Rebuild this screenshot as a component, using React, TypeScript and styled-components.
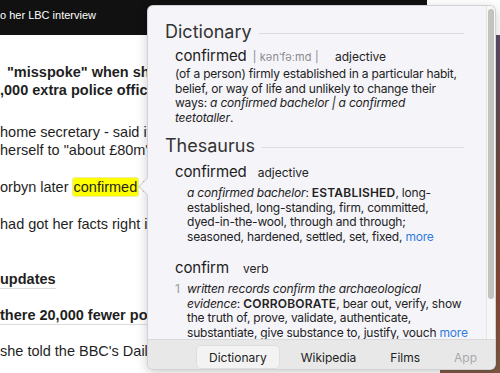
import React from "react";
import styled, { createGlobalStyle } from "styled-components";

const GlobalStyle = createGlobalStyle`
  html, body {
    margin: 0;
    padding: 0;
  }
  body {
    width: 500px;
    height: 373px;
    overflow: hidden;
    background: #fff;
  }
`;

const Page = styled.div`
  position: relative;
  width: 500px;
  height: 373px;
  overflow: hidden;
  display: flex;
  font-family: "Liberation Sans", Arial, sans-serif;
  color: #1f1f1f;
`;

const Article = styled.div`
  flex: 1;
  min-width: 0;
  display: flex;
  flex-direction: column;
  overflow: hidden;
  white-space: nowrap;
`;

const TopBar = styled.div`
  width: 427px;
  height: 35px;
  box-sizing: border-box;
  padding-top: 8px;
  background: #111;
  color: #fff;
  font-size: 11px;
  line-height: 14px;
`;

const Para = styled.p<{ $gap: number; $bold?: boolean; $indent?: number }>`
  margin: ${(p) => p.$gap}px 0 0;
  font-size: 14.5px;
  line-height: 18px;
  font-weight: ${(p) => (p.$bold ? 700 : 400)};
  text-indent: ${(p) => p.$indent ?? 0}px;
`;

const SubHead = styled.h3<{ $gap: number; $full?: boolean }>`
  margin: ${(p) => p.$gap}px 0 0;
  align-self: ${(p) => (p.$full ? "stretch" : "flex-start")};
  font-size: 14.5px;
  line-height: 18px;
  font-weight: 700;
  border-bottom: 1px solid #dcdcdc;
`;

const Highlight = styled.span`
  background: #ffff00;
  padding: 1px 1px;
  border-radius: 2px;
  box-shadow: 0 0 0 1px rgba(210, 200, 0, 0.35);
`;

const SideImage = styled.div`
  width: 60px;
  margin-top: 35px;
  background: linear-gradient(180deg, #5b4d6b 0%, #6d4b3d 40%, #8a4a36 75%, #7d5a45 100%);
`;

const Popup = styled.div`
  position: absolute;
  left: 147px;
  top: 5px;
  width: 349px;
  height: 365px;
  box-sizing: border-box;
  border: 1px solid rgba(0, 0, 0, 0.14);
  border-radius: 6px;
  background: #f5f4f9;
  box-shadow: 0 3px 12px rgba(0, 0, 0, 0.2);
  font-family: Inter, "Noto Sans", sans-serif;
  color: #222;

  &::before {
    content: "";
    position: absolute;
    left: -7px;
    top: 174px;
    width: 12px;
    height: 12px;
    background: #f5f4f9;
    border-left: 1px solid rgba(0, 0, 0, 0.14);
    border-bottom: 1px solid rgba(0, 0, 0, 0.14);
    transform: rotate(45deg);
  }
`;

const Frame = styled.div`
  position: relative;
  height: 100%;
  border-radius: 5px;
  overflow: hidden;
  display: flex;
  flex-direction: column;
`;

const Body = styled.div`
  flex: 1;
  min-height: 0;
  display: flex;
`;

const Content = styled.div`
  flex: 1;
  min-width: 0;
  padding: 15px 22px 0 17px;
  overflow: hidden;
`;

const ScrollTrack = styled.div`
  width: 8px;
  display: flex;
  flex-direction: column;
  background: #f7f7f7;
  border-left: 1px solid #e4e4e4;
`;

const ScrollThumb = styled.div`
  margin: 3px 1px 0 1px;
  height: 290px;
  border-radius: 4px;
  background: #c2c3bf;
`;

const SectionHead = styled.div<{ $gap?: number }>`
  display: flex;
  align-items: center;
  gap: 7px;
  margin-top: ${(p) => p.$gap ?? 0}px;
`;

const SectionTitle = styled.h2`
  margin: 0;
  font-size: 18px;
  line-height: 22px;
  font-weight: 400;
  color: #333;
`;

const Rule = styled.div`
  flex: 1;
  height: 1px;
  margin-top: 2px;
  background: #dddde0;
`;

const Entry = styled.div<{ $gap: number }>`
  margin-top: ${(p) => p.$gap}px;
  padding-left: 10px;
`;

const HeadRow = styled.div`
  display: flex;
  align-items: baseline;
`;

const Headword = styled.span`
  font-size: 15px;
  line-height: 20px;
  color: #1c1c1c;
  letter-spacing: -0.1px;
`;

const Pron = styled.span`
  margin-left: 6px;
  font-size: 11px;
  color: #8a8a8a;
  letter-spacing: 0.2px;
`;

const Pos = styled.span<{ $gap: number }>`
  margin-left: ${(p) => p.$gap}px;
  font-size: 12px;
  color: #222;
`;

const Def = styled.div<{ $gap: number; $indent?: number }>`
  margin-top: ${(p) => p.$gap}px;
  padding-left: ${(p) => p.$indent ?? 0}px;
  font-size: 12px;
  line-height: 14.5px;
  letter-spacing: -0.2px;
  white-space: nowrap;
`;

const Sense = styled.div<{ $gap: number }>`
  margin-top: ${(p) => p.$gap}px;
  display: grid;
  grid-template-columns: 12px 1fr;
  font-size: 12px;
  line-height: 14.5px;
  letter-spacing: -0.2px;
  white-space: nowrap;
`;

const SenseNum = styled.span`
  color: #9a9a9a;
`;

const Key = styled.b`
  font-weight: 600;
  letter-spacing: 0.2px;
`;

const More = styled.span`
  color: #2f7be0;
`;

const TabBar = styled.div`
  height: 30px;
  flex-shrink: 0;
  box-sizing: border-box;
  display: flex;
  align-items: flex-end;
  gap: 10px;
  padding: 0 0 1px 49px;
  background: #e8e8e9;
  border-top: 1px solid #dadada;
  white-space: nowrap;
`;

const Tab = styled.div<{ $active?: boolean; $muted?: boolean }>`
  height: 22px;
  padding: 0 12px;
  display: flex;
  align-items: center;
  font-size: 12px;
  border-radius: 4px;
  color: ${(p) => (p.$muted ? "#a8a8a8" : "#222")};
  background: ${(p) => (p.$active ? "#f3f3f3" : "transparent")};
  box-shadow: ${(p) => (p.$active ? "0 0 0 1px rgba(0,0,0,0.04)" : "none")};
`;

export default function App() {
  return (
    <>
      <GlobalStyle />
      <Page>
        <Article>
          <TopBar>o her LBC interview</TopBar>
          <Para $gap={28} $bold $indent={7}>
            "misspoke" when she
            <br />
            ,000 extra police officers
          </Para>
          <Para $gap={24}>
            home secretary - said it
            <br />
            herself to "about £80m"
          </Para>
          <Para $gap={19}>
            orbyn later <Highlight>confirmed</Highlight> it
          </Para>
          <Para $gap={19}>had got her facts right in</Para>
          <SubHead $gap={37}>updates</SubHead>
          <SubHead $gap={17} $full>
            there 20,000 fewer police
          </SubHead>
          <Para $gap={17}>she told the BBC's Daily</Para>
        </Article>
        <SideImage />

        <Popup>
          <Frame>
            <Body>
              <Content>
                <SectionHead>
                  <SectionTitle>Dictionary</SectionTitle>
                  <Rule />
                </SectionHead>
                <Entry $gap={3}>
                  <HeadRow>
                    <Headword>confirmed</Headword>
                    <Pron>| kənˈfəːmd |</Pron>
                    <Pos $gap={16}>adjective</Pos>
                  </HeadRow>
                  <Def $gap={1}>
                    (of a person) firmly established in a particular habit,
                    <br />
                    belief, or way of life and unlikely to change their
                    <br />
                    ways: <i>a confirmed bachelor | a confirmed</i>
                    <br />
                    <i>teetotaller</i>.
                  </Def>
                </Entry>

                <SectionHead $gap={10}>
                  <SectionTitle>Thesaurus</SectionTitle>
                  <Rule />
                </SectionHead>
                <Entry $gap={5}>
                  <HeadRow>
                    <Headword>confirmed</Headword>
                    <Pos $gap={11}>adjective</Pos>
                  </HeadRow>
                  <Def $gap={4} $indent={12}>
                    <i>a confirmed bachelor</i>: <Key>ESTABLISHED</Key>, long-
                    <br />
                    established, long-standing, firm, committed,
                    <br />
                    dyed-in-the-wool, through and through;
                    <br />
                    seasoned, hardened, settled, set, fixed, <More>more</More>
                  </Def>
                </Entry>
                <Entry $gap={14}>
                  <HeadRow>
                    <Headword>confirm</Headword>
                    <Pos $gap={14}>verb</Pos>
                  </HeadRow>
                  <Sense $gap={4}>
                    <SenseNum>1</SenseNum>
                    <span>
                      <i>written records confirm the archaeological</i>
                      <br />
                      <i>evidence</i>: <Key>CORROBORATE</Key>, bear out, verify, show
                      <br />
                      the truth of, prove, validate, authenticate,
                      <br />
                      substantiate, give substance to, justify, vouch <More>more</More>
                    </span>
                  </Sense>
                </Entry>
              </Content>
              <ScrollTrack>
                <ScrollThumb />
              </ScrollTrack>
            </Body>
            <TabBar>
              <Tab $active>Dictionary</Tab>
              <Tab>Wikipedia</Tab>
              <Tab>Films</Tab>
              <Tab $muted>App</Tab>
            </TabBar>
          </Frame>
        </Popup>
      </Page>
    </>
  );
}
